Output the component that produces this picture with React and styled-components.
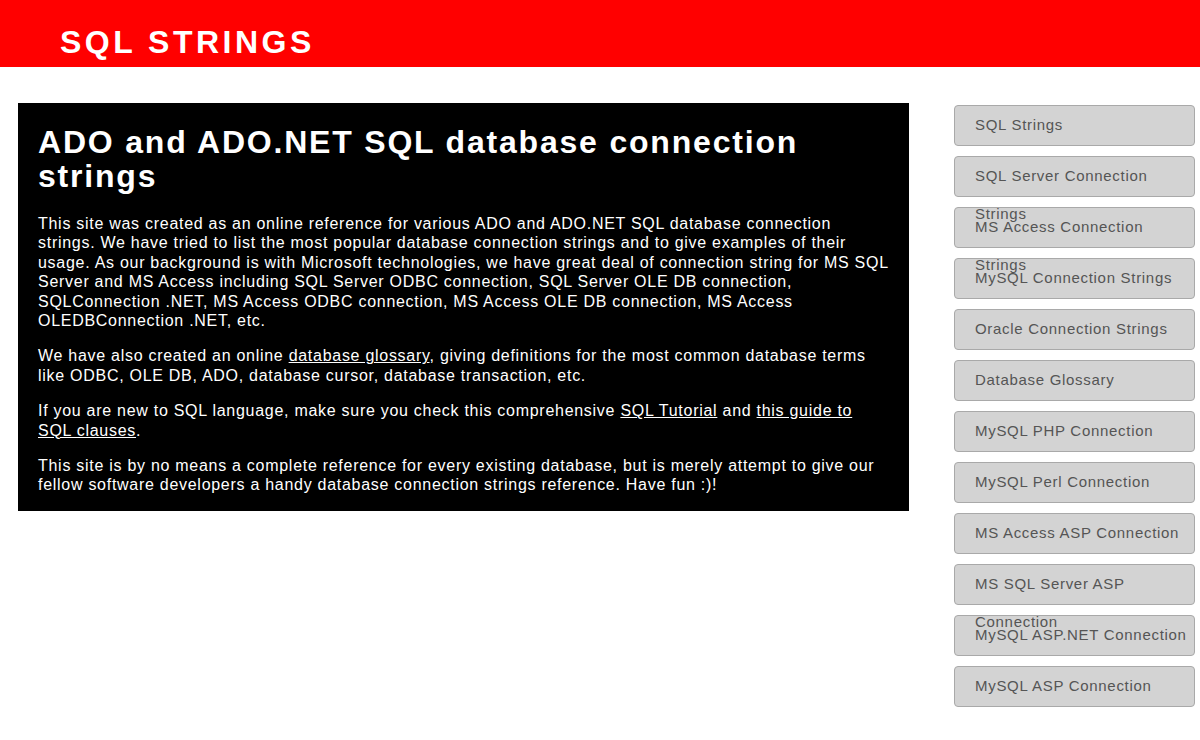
import React from "react";
import styled, { createGlobalStyle } from "styled-components";

const GlobalStyle = createGlobalStyle`
  html, body {
    margin: 0;
    padding: 0;
    background: #fff;
    font-family: "Liberation Sans", Arial, sans-serif;
  }
`;

const Header = styled.header`
  height: 67px;
  background: #ff0000;
  box-sizing: border-box;
  padding: 26px 0 0 60px;
`;

const Logo = styled.div`
  color: #fff;
  font-size: 32px;
  line-height: 32px;
  font-weight: bold;
  letter-spacing: 3.5px;
`;

const Layout = styled.div`
  display: flex;
  align-items: flex-start;
  gap: 45px;
  padding: 36px 5px 0 18px;
`;

const Main = styled.main`
  width: 891px;
  flex-shrink: 0;
  box-sizing: border-box;
  background: #000;
  color: #fff;
  padding: 22px 20px 0;
  display: flow-root;
`;

const Title = styled.h1`
  margin: 0 0 21px;
  font-size: 32px;
  line-height: 34px;
  font-weight: bold;
  letter-spacing: 1.8px;
`;

const Para = styled.p`
  margin: 0 0 16px;
  font-size: 16px;
  line-height: 19.4px;
  letter-spacing: 0.72px;
`;

const Link = styled.a`
  color: #fff;
  text-decoration: underline;
`;

const Sidebar = styled.nav`
  display: block;
  padding-top: 2px;
  width: 241px;
`;

const NavItem = styled.a`
  display: block;
  box-sizing: border-box;
  height: 41px;
  margin-bottom: 10px;
  padding: 0 0 0 20px;
  background: #d3d3d3;
  border: 1px solid #a9a9a9;
  border-radius: 4px;
  color: #555;
  font-size: 15px;
  line-height: 38px;
  letter-spacing: 0.7px;
  text-decoration: none;
`;

const links = [
  "SQL Strings",
  "SQL Server Connection Strings",
  "MS Access Connection Strings",
  "MySQL Connection Strings",
  "Oracle Connection Strings",
  "Database Glossary",
  "MySQL PHP Connection",
  "MySQL Perl Connection",
  "MS Access ASP Connection",
  "MS SQL Server ASP Connection",
  "MySQL ASP.NET Connection",
  "MySQL ASP Connection",
];

export default function App() {
  return (
    <>
      <GlobalStyle />
      <Header>
        <Logo>SQL STRINGS</Logo>
      </Header>
      <Layout>
        <Main>
          <Title>ADO and ADO.NET SQL database connection strings</Title>
          <Para>
            This site was created as an online reference for various ADO and
            ADO.NET SQL database connection strings. We have tried to list the
            most popular database connection strings and to give examples of
            their usage. As our background is with Microsoft technologies, we
            have great deal of connection string for MS SQL Server and MS
            Access including SQL Server ODBC connection, SQL Server OLE DB
            connection, SQLConnection .NET, MS Access ODBC connection, MS
            Access OLE DB connection, MS Access OLEDBConnection .NET, etc.
          </Para>
          <Para>
            We have also created an online <Link href="#">database glossary</Link>,
            giving definitions for the most common database terms like ODBC,
            OLE DB, ADO, database cursor, database transaction, etc.
          </Para>
          <Para>
            If you are new to SQL language, make sure you check this
            comprehensive <Link href="#">SQL Tutorial</Link> and{" "}
            <Link href="#">this guide to SQL clauses</Link>.
          </Para>
          <Para>
            This site is by no means a complete reference for every existing
            database, but is merely attempt to give our fellow software
            developers a handy database connection strings reference. Have
            fun :)!
          </Para>
        </Main>
        <Sidebar>
          {links.map((l) => (
            <NavItem key={l} href="#">
              {l}
            </NavItem>
          ))}
        </Sidebar>
      </Layout>
    </>
  );
}
